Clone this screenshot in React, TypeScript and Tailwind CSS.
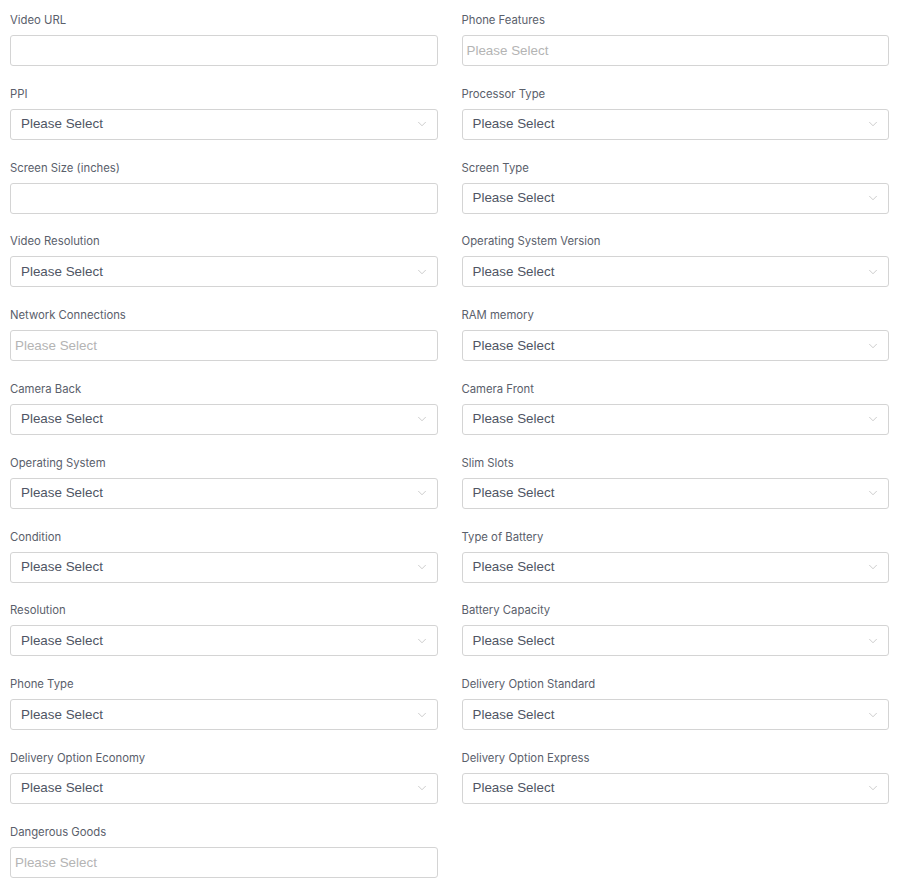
import { ChevronDown } from "lucide-react";

type Field = { label: string; kind: "text" | "select" | "multi" };

const fields: Field[] = [
  { label: "Video URL", kind: "text" },
  { label: "Phone Features", kind: "multi" },
  { label: "PPI", kind: "select" },
  { label: "Processor Type", kind: "select" },
  { label: "Screen Size (inches)", kind: "text" },
  { label: "Screen Type", kind: "select" },
  { label: "Video Resolution", kind: "select" },
  { label: "Operating System Version", kind: "select" },
  { label: "Network Connections", kind: "multi" },
  { label: "RAM memory", kind: "select" },
  { label: "Camera Back", kind: "select" },
  { label: "Camera Front", kind: "select" },
  { label: "Operating System", kind: "select" },
  { label: "Slim Slots", kind: "select" },
  { label: "Condition", kind: "select" },
  { label: "Type of Battery", kind: "select" },
  { label: "Resolution", kind: "select" },
  { label: "Battery Capacity", kind: "select" },
  { label: "Phone Type", kind: "select" },
  { label: "Delivery Option Standard", kind: "select" },
  { label: "Delivery Option Economy", kind: "select" },
  { label: "Delivery Option Express", kind: "select" },
  { label: "Dangerous Goods", kind: "multi" },
];

const FieldInput = ({ kind }: { kind: Field["kind"] }) => {
  const box =
    "h-[31px] w-full rounded-[3px] border border-[#d4d4d4] bg-white flex items-center text-[13.4px] font-['Liberation_Sans',Arial,sans-serif]";

  if (kind === "text") {
    return <input type="text" className={`${box} px-2 outline-none`} />;
  }

  if (kind === "multi") {
    return (
      <div className={`${box} pl-[4px] pt-px text-[#b4b4b4]`}>Please Select</div>
    );
  }

  return (
    <div className={`${box} justify-between pl-[10px] pr-[8px] text-[#4f5564]`}>
      <span>Please Select</span>
      <ChevronDown className="h-[14px] w-[14px] text-[#b0b0b0]" strokeWidth={1.1} />
    </div>
  );
};

export default function App() {
  return (
    <div className="min-h-screen bg-white pt-[12px] pl-[10px] pr-[13px]">
      <div className="grid grid-cols-2 gap-x-6 gap-y-[19.8px]">
        {fields.map((f) => (
          <div key={f.label} className="flex flex-col">
            {/* label */}
            <label className="h-4 text-[11.3px] leading-4 text-[#5a606b] font-['Inter',sans-serif]">
              {f.label}
            </label>
            <div className="mt-[7px]">
              <FieldInput kind={f.kind} />
            </div>
          </div>
        ))}
      </div>
    </div>
  );
}
